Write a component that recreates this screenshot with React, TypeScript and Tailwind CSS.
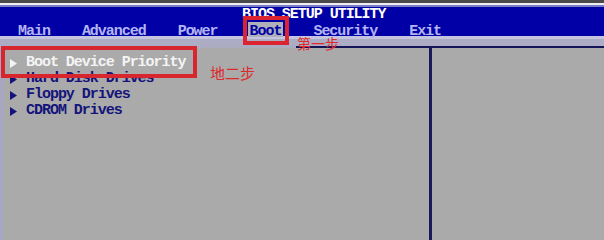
import React from "react";

const menu = ["Main", "Advanced", "Power", "Boot", "Security", "Exit"];
const items = ["Boot Device Priority", "Hard Disk Drives", "Floppy Drives", "CDROM Drives"];

function Arrow({ active }: { active: boolean }) {
  return (
    <svg width="7" height="9" viewBox="0 0 7 9" className="shrink-0">
      <path d="M0 0 L7 4.5 L0 9 Z" fill={active ? "#f4f4f4" : "#14147a"} />
    </svg>
  );
}

export default function App() {
  return (
    <div className="relative w-[604px] h-[240px] overflow-hidden bg-[#aaaaaa] font-['Liberation_Mono',monospace] font-bold text-[15px] tracking-[-1.03px]">
      {/* TOP EDGE */}
      <div className="h-[3px] bg-[#4a4a4c]" />
      <div className="h-[2px] bg-[#eeeef4]" />
      <div className="h-[2px] bg-[#7c7cc4]" />

      {/* HEADER */}
      <header className="h-[29px] bg-[#0000a6]">
        <div className="h-[15px] leading-[16px] pl-[242px] text-white whitespace-pre">BIOS SETUP UTILITY</div>
        <nav className="flex gap-8 pl-[18px] h-[14px]">
          {menu.map((m) =>
            m === "Boot" ? (
              <span key={m} className="-mx-[2px] px-[2px] h-[15px] leading-[20px] bg-[#b0b0b8] text-[#0000a6]">
                {m}
              </span>
            ) : (
              <span key={m} className="h-[15px] leading-[20px] text-[#b4b4f4]">
                {m}
              </span>
            )
          )}
        </nav>
      </header>

      {/* BAND UNDER MENU */}
      <div className="h-[3px] bg-[#c4c4e0]" />
      <div className="h-[7px] bg-[#acacc4]" />
      <div className="flex h-[2px]">
        <div className="w-[296px] bg-[#acacc0]" />
        <div className="flex-1 bg-[#141458]" />
      </div>

      {/* CONTENT */}
      <div className="grid grid-cols-[429px_1fr] h-[200px]">
        <div className="border-l-[3px] border-[#a6a6c6] pt-[7px]">
          {items.map((it, i) => (
            <div key={it} className="flex items-center h-4 leading-4 pl-[7px] gap-[9px]">
              <Arrow active={i === 0} />
              <span className={i === 0 ? "text-[#f4f4f4] whitespace-pre" : "text-[#14147a] whitespace-pre"}>{it}</span>
            </div>
          ))}
        </div>
        <div className="border-l-[3px] border-[#18185c]" />
      </div>

      {/* ANNOTATIONS */}
      <div className="absolute left-[243px] top-[16px] w-[46px] h-[29px] border-4 border-[#dc2430]" />
      <div className="absolute left-[1px] top-[46px] w-[196px] h-[32px] border-4 border-[#d8262e]" />
      <div className="absolute left-[297px] top-[35px] text-[14px] leading-[16px] tracking-normal font-normal text-[#e02a2a] font-['Noto_Sans_CJK_SC',sans-serif]">
        第一步
      </div>
      <div className="absolute left-[210px] top-[64px] text-[15px] leading-[17px] tracking-normal font-normal text-[#dc2a2a] font-['Noto_Sans_CJK_SC',sans-serif]">
        地二步
      </div>
    </div>
  );
}
